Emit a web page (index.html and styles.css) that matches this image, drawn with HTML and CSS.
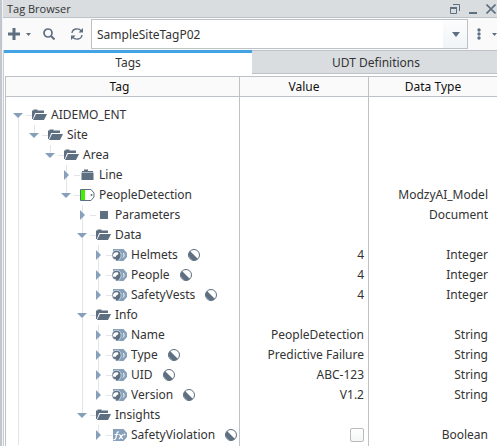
FILE: index.html
```html
<!DOCTYPE html>
<html lang="en">
<head>
<meta charset="utf-8">
<title>Tag Browser</title>
<link rel="stylesheet" href="styles.css">
</head>
<body>
<svg class="defs" aria-hidden="true">
  <symbol id="open" viewBox="0 0 16 12"><path d="M0 10V1.500h1.500V.5h4v1H12V4H3.200L.8 10z M4 5h11l-3 6H1z"/></symbol>
  <symbol id="folder" viewBox="0 0 16 12"><path d="M2 2h2V.5h4V2h5v1H2z M1.500 3.500h12V11h-12z"/></symbol>
  <symbol id="down" viewBox="0 0 10 10"><path d="M0 3h10L5 8z"/></symbol>
  <symbol id="right" viewBox="0 0 10 10"><path d="M3 0v10l5-5z"/></symbol>
  <symbol id="square" viewBox="0 0 16 12"><path d="M4 2h8v8H4z"/></symbol>
  <symbol id="udt" viewBox="0 0 16 12"><path d="M.5.5h10.500l3 3.500v4l-3 3.500H.5z" fill="#fff" stroke="#5d6f80"/><path d="M1 1h4v10H1z" fill="#41f000"/><circle cx="11.500" cy="6" r="1" fill="#5d6f80"/></symbol>
  <symbol id="tag" viewBox="0 0 16 14"><path d="M1 1h10.500l3.500 4v4l-3.500 4H6L1 6z" fill="#87a0b9"/><path d="M11 5c1.500 1 1.500 3 0 4.500" fill="none" stroke="#fff"/><path d="M0 7a4.500 4.500 0 0 1 9-.5c.5 3-1.500 4-2.500 6.500h-3V11.500C1 11.500 0 9.500 0 7z" fill="#5d6f80" stroke="#fff" stroke-width=".6"/><path d="M1 8.500C.5 5.500 3 3.500 6 4.500L6.500 6 4.500 7.500 3.500 9z" fill="#fff"/></symbol>
  <symbol id="fx" viewBox="0 0 16 14"><path d="M1 1h10.500l3.500 4v4l-3.500 4H1z" fill="#87a0b9"/><path d="M7 4C5 3.500 5 5 4.500 7S4 12 1.500 11.500M2.500 6.500h4M7 7c2-1 1.500 4 4 3.500M11 6.500L7 11" fill="none" stroke="#fff" stroke-width="1.200"/><circle cx="12.500" cy="6.500" r="1" fill="#fff"/></symbol>
  <symbol id="half" viewBox="0 0 14 14"><circle cx="7" cy="7" r="5.500" fill="#fff" stroke="#5d6f80"/><path d="M3 3a5.700 5.700 0 0 0 8 8z"/></symbol>
</svg>
<main class="panel">
  <header class="titlebar">
    <h1>Tag Browser</h1>
    <button aria-label="Float"><svg width="10" height="10" viewBox="0 0 10 10"><path d="M3 .5h6.500V7M.5 4v5.500h6V4" fill="none" stroke="#5d6f80"/><path d="M0 3h7v2H0z"/></svg></button>
    <button aria-label="Minimize"><svg width="10" height="10" viewBox="0 0 10 10"><path d="M1 8h8v2H1z"/></svg></button>
    <button aria-label="Close"><svg width="10" height="10" viewBox="0 0 10 10"><path d="M.5.5l9 9M9.500.5l-9 9" fill="none" stroke="#5d6f80" stroke-width="1.600"/></svg></button>
  </header>
  <div class="toolbar">
    <button class="add" aria-label="Add tag"><svg width="12" height="12" viewBox="0 0 12 12"><path d="M4.500 0h3v4.500H12v3H7.500V12h-3V7.500H0v-3h4.500z"/></svg><svg width="5" height="3" viewBox="0 0 5 3"><path d="M0 0h5L2.500 3z"/></svg></button>
    <button class="find" aria-label="Search"><svg width="12" height="12" viewBox="0 0 12 12"><circle cx="5" cy="5" r="4" fill="none" stroke="#5d6f80" stroke-width="1.700"/><path d="M8 8l3.500 3.500" stroke="#5d6f80" stroke-width="2"/></svg></button>
    <button class="refresh" aria-label="Refresh"><svg width="12" height="12" viewBox="0 0 12 12"><path d="M1 5C1.500.5 7.500-.5 10.500 3M11 7c-.5 4.500-6.500 5.500-9.500 2" fill="none" stroke="#5d6f80" stroke-width="1.400"/><path d="M12 0v4.500H7.500zM0 12V7.500h4.500z"/></svg></button>
    <div class="combo">
      <select aria-label="Tag provider"><option>SampleSiteTagP02</option></select>
      <svg class="caret" width="8" height="5" viewBox="0 0 8 5"><path d="M0 0h8L4 5z"/></svg>
    </div>
    <button class="more" aria-label="More options"><svg width="4" height="12" viewBox="0 0 4 12"><circle cx="2" cy="2" r="1.700"/><circle cx="2" cy="6" r="1.700"/><circle cx="2" cy="10" r="1.700"/></svg><svg width="5" height="3" viewBox="0 0 5 3"><path d="M0 0h5L2.500 3z"/></svg></button>
  </div>
  <nav class="tabs"><button class="active">Tags</button><button>UDT Definitions</button></nav>
  <table>
    <colgroup><col class="c-tag"><col class="c-value"><col></colgroup>
    <thead><tr><th class="tag-head">Tag</th><th>Value</th><th>Data Type</th></tr></thead>
    <tbody>
      <tr class="space"><td></td><td></td><td></td></tr>
      <tr><td><div class="node"><button class="toggle first" aria-label="Collapse"><svg><use href="#down"/></svg></button><i class="link"></i><svg class="icon"><use href="#open"/></svg><span>AIDEMO_ENT</span></div></td><td></td><td></td></tr>
      <tr><td><div class="node"><i class="guide line"></i><button class="toggle last" aria-label="Collapse"><svg><use href="#down"/></svg></button><i class="link"></i><svg class="icon"><use href="#open"/></svg><span>Site</span></div></td><td></td><td></td></tr>
      <tr><td><div class="node"><i class="guide line"></i><i class="guide"></i><button class="toggle last" aria-label="Collapse"><svg><use href="#down"/></svg></button><i class="link"></i><svg class="icon"><use href="#open"/></svg><span>Area</span></div></td><td></td><td></td></tr>
      <tr><td><div class="node"><i class="guide line"></i><i class="guide"></i><i class="guide"></i><button class="toggle line" aria-label="Expand"><svg><use href="#right"/></svg></button><i class="link"></i><svg class="icon"><use href="#folder"/></svg><span>Line</span></div></td><td></td><td></td></tr>
      <tr><td><div class="node"><i class="guide line"></i><i class="guide"></i><i class="guide"></i><button class="toggle last" aria-label="Collapse"><svg><use href="#down"/></svg></button><i class="link"></i><svg class="icon"><use href="#udt"/></svg><span>PeopleDetection</span></div></td><td></td><td>ModzyAI_Model</td></tr>
      <tr><td><div class="node"><i class="guide line"></i><i class="guide"></i><i class="guide"></i><i class="guide"></i><button class="toggle line" aria-label="Expand"><svg><use href="#right"/></svg></button><i class="link"></i><svg class="icon"><use href="#square"/></svg><span>Parameters</span></div></td><td></td><td>Document</td></tr>
      <tr><td><div class="node"><i class="guide line"></i><i class="guide"></i><i class="guide"></i><i class="guide"></i><button class="toggle line" aria-label="Collapse"><svg><use href="#down"/></svg></button><i class="link"></i><svg class="icon"><use href="#open"/></svg><span>Data</span></div></td><td></td><td></td></tr>
      <tr><td><div class="node"><i class="guide line"></i><i class="guide"></i><i class="guide"></i><i class="guide"></i><i class="guide line"></i><button class="toggle line" aria-label="Expand"><svg><use href="#right"/></svg></button><i class="link"></i><svg class="icon tall"><use href="#tag"/></svg><span>Helmets</span><svg class="badge"><use href="#half"/></svg></div></td><td>4</td><td>Integer</td></tr>
      <tr><td><div class="node"><i class="guide line"></i><i class="guide"></i><i class="guide"></i><i class="guide"></i><i class="guide line"></i><button class="toggle line" aria-label="Expand"><svg><use href="#right"/></svg></button><i class="link"></i><svg class="icon tall"><use href="#tag"/></svg><span>People</span><svg class="badge"><use href="#half"/></svg></div></td><td>4</td><td>Integer</td></tr>
      <tr><td><div class="node"><i class="guide line"></i><i class="guide"></i><i class="guide"></i><i class="guide"></i><i class="guide line"></i><button class="toggle last" aria-label="Expand"><svg><use href="#right"/></svg></button><i class="link"></i><svg class="icon tall"><use href="#tag"/></svg><span>SafetyVests</span><svg class="badge"><use href="#half"/></svg></div></td><td>4</td><td>Integer</td></tr>
      <tr><td><div class="node"><i class="guide line"></i><i class="guide"></i><i class="guide"></i><i class="guide"></i><button class="toggle line" aria-label="Collapse"><svg><use href="#down"/></svg></button><i class="link"></i><svg class="icon"><use href="#open"/></svg><span>Info</span></div></td><td></td><td></td></tr>
      <tr><td><div class="node"><i class="guide line"></i><i class="guide"></i><i class="guide"></i><i class="guide"></i><i class="guide line"></i><button class="toggle line" aria-label="Expand"><svg><use href="#right"/></svg></button><i class="link"></i><svg class="icon tall"><use href="#tag"/></svg><span>Name</span></div></td><td>PeopleDetection</td><td>String</td></tr>
      <tr><td><div class="node"><i class="guide line"></i><i class="guide"></i><i class="guide"></i><i class="guide"></i><i class="guide line"></i><button class="toggle line" aria-label="Expand"><svg><use href="#right"/></svg></button><i class="link"></i><svg class="icon tall"><use href="#tag"/></svg><span>Type</span><svg class="badge"><use href="#half"/></svg></div></td><td>Predictive Failure</td><td>String</td></tr>
      <tr><td><div class="node"><i class="guide line"></i><i class="guide"></i><i class="guide"></i><i class="guide"></i><i class="guide line"></i><button class="toggle line" aria-label="Expand"><svg><use href="#right"/></svg></button><i class="link"></i><svg class="icon tall"><use href="#tag"/></svg><span>UID</span><svg class="badge"><use href="#half"/></svg></div></td><td>ABC-123</td><td>String</td></tr>
      <tr><td><div class="node"><i class="guide line"></i><i class="guide"></i><i class="guide"></i><i class="guide"></i><i class="guide line"></i><button class="toggle last" aria-label="Expand"><svg><use href="#right"/></svg></button><i class="link"></i><svg class="icon tall"><use href="#tag"/></svg><span>Version</span><svg class="badge"><use href="#half"/></svg></div></td><td>V1.2</td><td>String</td></tr>
      <tr><td><div class="node"><i class="guide line"></i><i class="guide"></i><i class="guide"></i><i class="guide"></i><button class="toggle last" aria-label="Collapse"><svg><use href="#down"/></svg></button><i class="link"></i><svg class="icon"><use href="#open"/></svg><span>Insights</span></div></td><td></td><td></td></tr>
      <tr><td><div class="node"><i class="guide line"></i><i class="guide"></i><i class="guide"></i><i class="guide"></i><i class="guide"></i><button class="toggle last" aria-label="Expand"><svg><use href="#right"/></svg></button><i class="link"></i><svg class="icon tall"><use href="#fx"/></svg><span>SafetyViolation</span><svg class="badge"><use href="#half"/></svg></div></td><td><input type="checkbox" aria-label="SafetyViolation value"></td><td>Boolean</td></tr>
      <tr class="fill"><td></td><td></td><td></td></tr>
    </tbody>
  </table>
</main>
</body>
</html>
```
FILE: styles.css
```css
* { box-sizing: border-box; }
body {
  margin: 0;
  color: #333;
  background: #fff;
  font: 12px/20px "Noto Sans", sans-serif;
}
button, select { font: inherit; color: inherit; }
button {
  display: flex;
  align-items: center;
  justify-content: center;
  padding: 0;
  border: 0;
  background: none;
}
svg { display: block; flex: none; fill: #5d6f80; }
.defs { position: absolute; width: 0; height: 0; }

.panel {
  display: flex;
  flex-direction: column;
  height: 100vh;
  overflow: hidden;
  border-left: 2px solid #c1c7cd;
  box-shadow: inset 1px 0 #f0f2f3, inset 2px 0 #c8cdd1;
  padding-left: 1px;
}
.titlebar {
  display: flex;
  flex: none;
  align-items: center;
  gap: 8px;
  height: 18px;
  padding: 0 1px 0 4px;
  background: #d9dde0;
  border-bottom: 1px solid #bcc2c7;
}
.titlebar h1 {
  flex: 1;
  margin: 0;
  font: 400 11px/16px "Open Sans", sans-serif;
}
.toolbar {
  display: flex;
  flex: none;
  align-items: center;
  height: 32px;
  padding-left: 5px;
  background: #fafafa;
}
.add { gap: 6px; }
.find { margin-left: 12px; }
.refresh { margin-left: 16px; }
.combo {
  position: relative;
  flex: 1;
  height: 30px;
  margin-left: 8px;
  border: 1px solid #bcc2c7;
  background: #fff;
}
.combo select {
  width: 100%;
  height: 100%;
  padding: 2px 28px 0 5px;
  border: 0;
  appearance: none;
  background: linear-gradient(#fcfdfd, #f0f4f6) right / 24px 100% no-repeat;
}
.caret { position: absolute; right: 7px; top: 12px; pointer-events: none; }
.more { gap: 11px; margin-left: 9px; }

.tabs {
  display: flex;
  flex: none;
  height: 26px;
  margin-right: -3px;
  padding-left: 1px;
}
.tabs button {
  flex: 1;
  height: 24px;
  padding-top: 2px;
  background: #d9dde0;
  border-top: 1px solid #bcc2c7;
  border-bottom: 1px solid #bcc2c7;
}
.tabs .active {
  padding: 0 0 2px;
  background: #fff;
  border-top: 3px solid #42a4e4;
  border-bottom: 0;
}

table {
  flex: 1;
  width: calc(100% - 2px);
  margin-left: 2px;
  border-collapse: separate;
  border-spacing: 0;
  table-layout: fixed;
}
.c-tag { width: 235px; }
.c-value { width: 129px; }
th {
  height: 21px;
  padding: 0;
  color: #111;
  background: #fafafa;
  border: solid #bcc2c7;
  border-width: 1px 1px 1px 0;
  font-weight: 400;
  line-height: 18px;
}
th:first-child, td:first-child { border-left: 1px solid #bcc2c7; }
th:last-child, td:last-child { border-right: 0; }
.tag-head { padding-right: 6px; }
td {
  height: 20px;
  padding: 0 4px 0 0;
  border-right: 1px solid #bcc2c7;
  text-align: right;
  white-space: nowrap;
}
td:last-child { padding-right: 9px; }
td:first-child { padding: 0 0 0 4px; }
.space td { height: 8px; }
.fill td { height: auto; }

.node { display: flex; align-items: center; height: 20px; }
.guide, .toggle { flex: none; width: 16px; height: 20px; background: 8px 0 / 1px 100% no-repeat; }
.line, .first, .last { background-image: linear-gradient(#e3e5ed, #e3e5ed); }
.first { background-position: 8px 100%; background-size: 1px 50%; }
.last { background-size: 1px 50%; }
.toggle svg { width: 10px; height: 10px; fill: #87a0b9; }
.link { flex: none; width: 6px; height: 1px; background: #e3e5ed; }
.icon { width: 16px; height: 12px; margin-right: 3px; }
.tall { height: 14px; }
.badge { width: 14px; height: 14px; margin-left: 9px; }

input {
  display: block;
  width: 14px;
  height: 14px;
  margin: 0 0 0 auto;
  appearance: none;
  border: 1px solid #bbb;
  border-radius: 2px;
  background: linear-gradient(#fff, #f4f5f6);
}
```
